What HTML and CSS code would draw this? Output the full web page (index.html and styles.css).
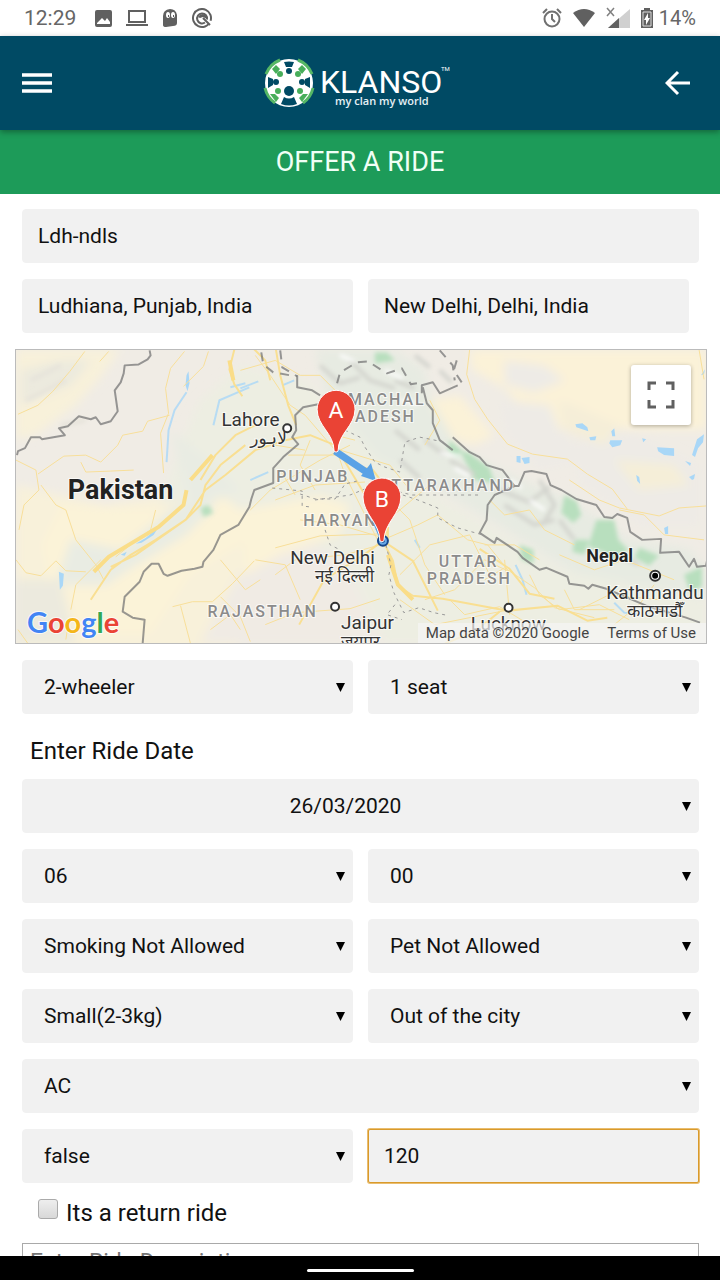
FILE: index.html
```html
<!DOCTYPE html>
<html lang="en">
<head>
<meta charset="utf-8">
<meta name="viewport" content="width=device-width, initial-scale=1">
<title>Klanso - Offer a ride</title>
<link rel="stylesheet" href="styles.css">
</head>
<body>
<div class="statusbar">
  <div class="status-left">
    <span class="clock">12:29</span>
    <svg width="17" height="17" viewBox="0 0 17 17"><path fill="#606060" fill-rule="evenodd" d="M2 0h13q2 0 2 2v13q0 2-2 2H2q-2 0-2-2V2q0-2 2-2zM2 14h13v-2l-3-4-2 3-3-3-5 5z"/></svg>
    <svg width="22" height="18" viewBox="0 0 22 18"><path fill="none" stroke="#606060" stroke-width="2" d="M3 2h16v11H3zM0 16h22"/></svg>
    <svg width="16" height="18" viewBox="0 0 16 18"><path fill="#606060" d="M1 16V7q0-6 7-7 6 0 7 6v8q0 3-4 3l-7 1q-3 0-3-2z"/><ellipse cx="6" cy="6" rx="2" ry="3" fill="#fff"/><ellipse cx="11" cy="6" rx="2" ry="3" fill="#fff"/><path d="M6 6h1v2H6zM11 6h1v2h-1z" fill="#606060"/></svg>
    <svg width="21" height="21" viewBox="0 0 21 21"><g fill="none" stroke="#606060" stroke-width="2"><circle cx="10" cy="10" r="9" stroke-dasharray="48 4 5 0" transform="rotate(70 10 10)"/><path d="M13 14.500a5 5 0 1 1 2-3M11 10l7 7"/></g><path fill="#606060" d="M6 9q2-3 5-3 4 1 4 5l-4-2-3 1z"/></svg>
  </div>
  <div class="status-right">
    <svg width="20" height="20" viewBox="0 0 20 20"><g fill="none" stroke="#707070" stroke-width="2"><circle cx="10" cy="11" r="7.500"/><path d="M10 6v5l3 3M1 5l4-4M19 5l-4-4"/></g></svg>
    <svg width="22" height="18" viewBox="0 0 22 18"><path fill="#606060" d="M0 4q11-8 22 0L11 18z"/></svg>
    <svg width="24" height="22" viewBox="0 0 24 22"><path fill="#d0d0d0" d="M24 2v19H2z"/><path fill="#606060" d="M13 11v10H2z"/><path stroke="#808080" stroke-width="1.500" d="M1 1l7 8M8 1L1 9"/></svg>
    <svg width="12" height="20" viewBox="0 0 12 20"><path fill="#606060" d="M3 2V0h6v2h3v18H0V2z"/><path fill="none" stroke="#ddd" d="M2 4h8v14H2z"/><path fill="#fff" d="M7 5l-4 7h2v5l4-7H7z"/></svg>
    <span class="battery">14%</span>
  </div>
</div>

<header class="appbar">
  <button class="icon-button" type="button" aria-label="Menu">
    <svg width="30" height="26" viewBox="0 0 30 26"><path stroke="#fff" stroke-width="3.500" d="M0 5h30M0 13h30M0 21h30"/></svg>
  </button>
  <a class="brand" href="#" aria-label="Klanso">
    <svg width="192" height="56" viewBox="262 54 192 56">
      <g transform="translate(288 82)">
        <circle r="24" fill="#fff"/>
        <g fill="none" stroke="#55b765" stroke-width="3">
          <path d="M-23-9A25 25 0 0 1-9-23M9-23A25 25 0 0 1 23-9M-24 5A25 25 0 0 0-14 20M14 20A25 25 0 0 0 24 5"/>
        </g>
        <g fill="#48ae5a">
          <circle cx="-9" cy="-9" r="3"/><circle cx="9" cy="-9" r="3"/><circle cx="-11" cy="8" r="3"/><circle cx="11" cy="8" r="3"/>
          <path d="M-17-14l4-4 4 4-4 5zM17-14l-4-4-4 4 4 5zM-19 11l5 0 4 4-3 4zM19 11l-5 0-4 4 3 4z"/>
        </g>
        <g fill="#004a64">
          <circle cy="-12" r="3"/><circle cx="-13" cy="-1" r="3"/><circle cx="13" cy="-1" r="3"/><circle cy="8" r="5"/>
          <path d="M-5-21Q0-22 5-21L3-16H-3zM-21-6l5 2v6l-5 3zM21-6l-5 2v6l5 3zM-5 14Q0 17 5 14L8 21Q0 24-8 21z"/>
        </g>
      </g>
      <text class="brand-name" x="319" y="92">KLANSO</text>
      <text class="brand-mark" x="440" y="70">TM</text>
      <text class="brand-tag" x="334" y="104">my clan my world</text>
    </svg>
  </a>
  <button class="icon-button" type="button" aria-label="Back">
    <svg width="25" height="26" viewBox="0 0 25 26"><path fill="none" stroke="#fff" stroke-width="3" d="M25 13H3M13 2L2 13l11 11"/></svg>
  </button>
</header>

<main class="content">
  <h1 class="title">OFFER A RIDE</h1>
  <form class="form">
    <input class="field" type="text" value="Ldh-ndls" aria-label="Ride name">
    <div class="row">
      <input class="field" type="text" value="Ludhiana, Punjab, India" aria-label="From">
      <div class="destination"><input class="field" type="text" value="New Delhi, Delhi, India" aria-label="To"></div>
    </div>

    <div class="map">
      <svg class="map-canvas" viewBox="15 349 692 295" preserveAspectRatio="xMidYMid slice" role="img" aria-label="Route from Ludhiana to New Delhi">
        <defs>
          <filter id="soft" x="-20%" y="-20%" width="140%" height="140%"><feGaussianBlur stdDeviation="5"/></filter>
          <filter id="relief" x="-20%" y="-20%" width="140%" height="140%"><feGaussianBlur stdDeviation="2"/></filter>
        </defs>
        <rect x="15" y="349" width="692" height="295" fill="#f0ece5"/>
        <g filter="url(#soft)">
          <path fill="#f8f1da" d="M15 349h105l-22 30-22 25-40 30-21 5zM15 485l90 20 60-10 70-10 40 60-40 110H15z"/>
          <path fill="#fbf3d8" d="M60 505l110 5 40-15 42 10-12 40-50 30-40 60H60l-20-90z"/>
          <path fill="#edeee2" d="M200 400l40-35 65 15 70 65 60 50 130 75 142 30v44H350l-80-110-50-40-60 10 20-60z"/>
          <path fill="#e9ece3" d="M70 540l50 10 50-40 25-15 20 10-30 30-50 30-30 20-50 0zM170 430l40 30 30 30-50 20z"/>
          <path fill="#f0ebe4" d="M235 580l50-50 60 30 40 84H200z"/>
          <path fill="#fbf3d8" d="M240 510l80-15 30 10-10 30-60 20-35 20z"/>
          <path fill="#fbf2d8" d="M470 349h237v80l-60 0-50 0-60 0-30-40-35-20zM430 400l30-5 35 40-20 10-35-10z"/>
          <path fill="#eeebe6" d="M505 360l40 5 20 15-30 12-30-8zM500 400l50 5 10 25 30 30-50 10-35-40zM580 420l60 15 60 30v60l-60 0-60-45z"/>
          <path fill="#f5eed8" d="M560 400l60 25-15 20-40-15zM615 460l60 5 15 20-50 5z"/>
          <path fill="#eceade" d="M20 370l40-10 30 0-20 25-50 20zM15 580h45l15 64H15z"/>
          <path fill="#e7ebe2" d="M315 349h80l30 20 5 30 30 50 60 30 50 20 60 40 60 10 17 20v30l-50-10-80-15-80-50-60-35-60-30-50-60z"/>
        </g>
        <g fill="#b8dfbe" filter="url(#relief)">
          <path d="M460 450l10 3 20 15 5 15-20-3zM565 495l12 6 5 14-8 8-12-10zM597 520l18 0 4 20 10 10-15 12-10-10-15-5zM575 540l15 0-5 15-12-3zM640 548l20 8-10 10-15-8zM520 545l14 5 0 14-12-4zM375 352l12 0 8 8-20 3zM450 440l12 10-4 8-10-8zM685 575l18-8v20l-12 5zM372 475l8 8 15 0-10 10zM200 508l8-3 5 8-10 4z"/>
        </g>
        <g fill="none" stroke="#d3d4ce" stroke-width="4" filter="url(#relief)">
          <path d="M320 365l20 18 20-6M350 360l20 20 25 8M395 380l20 8M440 370l12 12M425 440l20 15M395 430l25 20M500 490l30 12 20-15M505 505l30 20 20-5M540 480l15 25-12 20M560 520l15 20M620 555l20 10M450 460l25 15M400 460l20 18M415 355l15 12"/>
          <path stroke="#e6e3da" d="M30 380l30-15M25 400l40-20M60 425l25-5"/>
        </g>
        <g fill="none" stroke="#fff" stroke-width="3" filter="url(#relief)">
          <path d="M340 355l15 6M385 370l18 8M440 453l20 3M455 468l15 8M400 400l18 4M530 500l15 10M510 480l12 8"/>
        </g>
        <g fill="#a9d7f7">
          <path d="M186 375l2-4 1 12-2 8-2-6zM576 424l7-1 5 4 1 4-12-4zM590 437l7-1-1 4-5 0zM611 440l12 0-2 5-8 2-3-4zM612 431l3-3 1 8-3 0zM658 447l17 1v8l-10-1-6-4zM517 456l4 0 0 7-4-1zM522 458l8-1 0 6-5 1zM693 455l5-16 7-5-1 8-5 6-3 9zM686 461l6 2-1 3zM690 477l6-3-1 5-2 1zM135 544l10-6 13-11-5 8-12 8zM58 572l5 2-1 12-3 4zM120 555l6-3-2 4zM702 375l4-6-1 5zM665 528l4-2v8l-3 0zM637 475l3 2 1 7-3-3zM643 438l4 1-3 3z"/>
        </g>
        <g fill="none" stroke="#a9d7f7" stroke-width="2" opacity=".8">
          <path d="M186 392l-12 18-6 20-2 32M213 425l6-25 30-13M230 387l15-4M240 388l18-7M282 385l12-5M250 480l18-8M516 565l7 15 4 15M615 603l10 10 15 2M415 540l5 8"/>
        </g>
        <g fill="none" stroke="#f8df9a" stroke-width="1">
          <path d="M84 351l-15 20-17 20-15 14-20 9M108 351l-9 10M37 474l26-18 22-1 15 7 17-17 5-10 20-4 5-10 22-6M80 462l5 10 25-1 23-1M184 351l-14 17-5 20 3 25-8 20 3 40M208 351l-5 15-20 20M15 460l20 10 3 20-15 15-5 25M40 485l15 20 10 5 10 30 20 25 8 15M15 560l10 13 15 3 15-15 10 10 20 1M155 510l-5 20-20 15-15 12M70 610l5-25 25-25M65 640l3-20M17 630l10 14M172 607l20-5 20 0 20-18 22-23M180 606l10 38M220 597l20 20 10 25"/>
          <path d="M255 355l15 20 20 30 15 10 30 35M240 370l35-10 25 15M255 440l20 5 30 5M320 415l15 20 20 5M350 445l-30 15-50 30-20 20M335 445l10 30 15 30 20 40M338 455l-50 0M275 500l40-15 50-3M300 520l40 5 40 12M275 548l45-12 60-2M265 625l30-12 55-4 30-10M380 545l-35 10-50 5-20 15M255 560l30 5 15 35M383 540l35-15 20-10 30 25 20 5 20 25M390 500l20 20 15 45 20 30M375 530l25-20 30-25M400 575l30-30 40-10 20 40M425 600l30-10 30-30 25 12M400 600l35 25 70-14M450 600l15 15 35-8 25 15M485 580l20-12 30 20 20 20 40 10M505 560l5 55M530 575l10 20 20 15 40-5 30 15M565 590l10 20 40 0M580 610l30-15 50 5M560 555l35 15 30-10 50 20M340 395l-20-20-20 0M340 450l50 15 20 25M430 400l10 20-15 25M295 495l-15-25M310 440l-10 25 15 25"/>
          <path d="M470 349l-3 25 8 25 13 20 20 25 25 10 35 5 20 15 25 15 15 20M490 500l15 15 25-5 15 20 30 15M485 545l30 0 25 15M570 480l30 20 20 8 40 8 20-8 27-2M620 510l25 5 20 20 40 5M700 349l5 30M655 585l-15 20-25 20M210 630l20-15 10 15M220 560l25 30 15-10"/>
        </g>
        <g fill="none" stroke="#f9df92" stroke-width="2" stroke-linejoin="round">
          <path d="M234 349l-5 20 5 15 8 12M275 345l5 30 8 30 8 20M335 445l-25-10-25 5-30 10-30 25-20 15-20 30-30 20-25 15-20 15-20 30M245 445l-25 20-15 20-5 20-15 15-50 35-25 12M255 425l-20 10-20 20-15 25M338 450l15 25 15 25 16 42M338 450l15 15 20 5 15 20 0 50M384 540l-20 15-40 25-25 45M383 541l10 20 5 25 15 10 30 3 65 12 50-5 30 15 20-3M383 541l30 20 25 50M500 612l-25 20-30 12M250 345l15 15 5 20M390 500l-5 40M480 549l30 20 20 25 25 5"/>
        </g>
        <path fill="none" stroke="#fadd88" stroke-width="4" d="M186 490l-3 15-25 22-25 15-25 15-15 15M229 360l4 20M212 455l-22 25M388 555l10 30 15 15"/>
        <g fill="none" stroke="#777" stroke-width="1" stroke-linejoin="round">
          <path stroke-width="2" opacity=".75" d="M149 350l1 5-3 4-9 5-14 1-1 8-3 9-6 8 3 21-7 10-10 3-5-7-5 2-12-3-11 10-9 2 6 7-23 4-2-2-9 0-6 11-7 3-1 4"/>
          <path stroke-width="2" opacity=".75" d="M297 375v12l15 3 8 5M318 404l-15 3-8 8 1 15-4 7 6 7-15 13-10 11v15l-19 7-3 9-2 8-11 18-18 10-7 15-10 12-1 5-8 2-13 2-14 5-4-2-5-10h-7l-8 8-4 10-15 15-2 15 10 6 12 2-2 24"/>
          <path stroke-width="2" opacity=".75" d="M422 393v-8l11-3 7 11 18-8M423 387l4 16 6 7v13l7 17 13 10M453 437l17 15 10 5 7 8 16 5 12 16h4l6-14 7-1 15 3 4 11 11 5 15 9 20 6 8 12 8 1 5-4 10 4 3 14 12 8 19-1-1 14 19-1 10 15 5-8 3 8 9-1 1-5h8M515 486l-20 9-7 10-1 15-7 13 15 10 2-5 21 14 5 6 17 12 7-2 21 9 2 7 15 2 4 3 4-4 14 4 40 17 40 12 14 5"/>
          <path stroke-dasharray="9 7" stroke-width="2" opacity=".75" d="M261 352l2 12 10 8 17 3M280 350l2 17 15 9M337 383l3-11 17-10 11-1 19 12 15-5 9 16 11-2M440 350l13 15 2 15M457 360l-3 10 8 12"/>
          <path stroke-dasharray="3 4" stroke="#999" d="M345 430l15 7 5 10 10 15 10 5 15 5 5-30 15-5 25 5M272 488l30 3 0 15 8 1M300 494l15 5 20 0 10-15 12-3M325 530l5 15 10 5M315 500l35-5 20-8M392 490l20 5 20 0 50 0M403 495l15 5 20 8 0 10 20 10 25 7M386 545l5 20-2 10 5 18 10 20 15-5 15 5 15 3M395 605l-8 10 15 5"/>
        </g>
        <g class="map-region">
          <text x="348" y="405">MACHAL</text><text x="355" y="422">ADESH</text>
          <text x="276" y="482">PUNJAB</text><text x="379" y="491">UTTARAKHAND</text>
          <text x="303" y="526">HARYANA</text><text x="439" y="567">UTTAR</text><text x="427" y="584">PRADESH</text>
          <text x="207" y="617">RAJASTHAN</text>
        </g>
        <g class="map-country"><text x="67" y="499" class="map-country-large">Pakistan</text><text x="587" y="562">Nepal</text></g>
        <g class="map-city">
          <text x="221" y="426">Lahore</text><text x="250" y="444" class="map-native">لاہور</text>
          <text x="290" y="564">New Delhi</text><text x="315" y="582" class="map-native">नई दिल्ली</text>
          <text x="341" y="629">Jaipur</text><text x="341" y="648" class="map-native">जयपुर</text>
          <text x="607" y="599">Kathmandu</text><text x="628" y="617" class="map-native">काठमाडौँ</text>
          <text x="471" y="630">Lucknow</text>
        </g>
        <g fill="#fff" stroke="#333" stroke-width="2"><circle cx="287" cy="428" r="4"/><circle cx="335" cy="607" r="4"/><circle cx="509" cy="608" r="4"/><circle cx="656" cy="576" r="5"/></g>
        <circle cx="656" cy="576" r="3"/>
        <path stroke="#5aa2e6" stroke-width="7" d="M335 451l33 22"/><path fill="#5aa2e6" d="M361 476l10-13 5 18z"/>
        <path stroke="#5aa2e6" stroke-width="4" d="M374 520l9 22"/>
        <circle cx="383" cy="541" r="5" fill="#6aaae8" stroke="#17478b" stroke-width="2"/><circle cx="383" cy="541" r="2" fill="#17478b"/>
        <g class="map-pin">
          <path d="M334 451c0-18-17-25-17-42a19 19 0 0 1 38 0c0 17-17 24-17 42q-2 2-4 0z"/><text x="336" y="418">A</text>
          <path d="M380 541c0-18-17-27-17-44a19 19 0 0 1 38 0c0 17-17 26-17 44q-2 2-4 0z"/><text x="382" y="507">B</text>
        </g>
        <text class="map-logo" x="26" y="633"><tspan fill="#4285f4">G</tspan><tspan fill="#ea4335">o</tspan><tspan fill="#f4b619">o</tspan><tspan fill="#4285f4">g</tspan><tspan fill="#34a853">l</tspan><tspan fill="#ea4335">e</tspan></text>
      </svg>
      <button class="map-expand" type="button" aria-label="Toggle fullscreen view">
        <svg width="28" height="28" viewBox="0 0 28 28"><path fill="none" stroke="#606060" stroke-width="3" d="M2 9V2h7M19 2h7v7M26 19v7h-7M9 26H2v-7"/></svg>
      </button>
      <div class="map-credit"><span>Map data ©2020 Google</span><a href="#">Terms of Use</a></div>
    </div>

    <div class="row">
      <div class="select"><select class="field" aria-label="Vehicle"><option>2-wheeler</option></select></div>
      <div class="select"><select class="field" aria-label="Seats"><option>1 seat</option></select></div>
    </div>
    <label class="date-label" for="date">Enter Ride Date</label>
    <div class="select date"><select class="field" id="date"><option>26/03/2020</option></select></div>
    <div class="row">
      <div class="select"><select class="field" aria-label="Hour"><option>06</option></select></div>
      <div class="select"><select class="field" aria-label="Minute"><option>00</option></select></div>
    </div>
    <div class="row">
      <div class="select"><select class="field" aria-label="Smoking"><option>Smoking Not Allowed</option></select></div>
      <div class="select"><select class="field" aria-label="Pets"><option>Pet Not Allowed</option></select></div>
    </div>
    <div class="row">
      <div class="select"><select class="field" aria-label="Luggage"><option>Small(2-3kg)</option></select></div>
      <div class="select"><select class="field" aria-label="Trip type"><option>Out of the city</option></select></div>
    </div>
    <div class="select"><select class="field" aria-label="Air conditioning"><option>AC</option></select></div>
    <div class="row">
      <div class="select"><select class="field" aria-label="Recurring"><option>false</option></select></div>
      <input class="field active" type="text" value="120" aria-label="Price">
    </div>
    <div class="return"><input type="checkbox" id="return"><label for="return">Its a return ride</label></div>
    <textarea class="description" placeholder="Enter Ride Description" aria-label="Ride description"></textarea>
  </form>
</main>
<div class="navbar"><span class="home-handle"></span></div>
</body>
</html>
```
FILE: styles.css
```css
* { box-sizing: border-box; }

body {
  margin: 0;
  height: 100vh;
  display: flex;
  flex-direction: column;
  background: #fff;
  color: #111;
  font-family: Roboto, "Noto Sans", sans-serif;
  font-size: 21px;
}

button, input, select, textarea { font: inherit; color: inherit; }
svg { display: block; }

.statusbar {
  flex: none;
  height: 36px;
  padding: 0 24px;
  display: flex;
  justify-content: space-between;
  color: #666;
}
.status-left, .status-right { display: flex; align-items: center; }
.status-left { gap: 14px; }
.status-right { gap: 11px; }
.clock { margin-right: 5px; }
.battery { margin-left: -5px; font-size: 20px; }

.appbar {
  flex: none;
  position: relative;
  z-index: 1;
  height: 94px;
  padding: 0 30px 0 22px;
  display: flex;
  align-items: center;
  justify-content: space-between;
  background: #004a64;
  box-shadow: 0 2px 6px rgba(0, 0, 0, .35);
}
.icon-button { padding: 0; border: 0; background: none; }
.brand-name { font-size: 32px; font-weight: 400; fill: #fff; }
.brand-mark { font-size: 6px; fill: #fff; }
.brand-tag { font-family: "Open Sans", sans-serif; font-size: 11px; font-weight: 600; fill: #e6f1f5; }

.content {
  flex: 1;
  min-height: 0;
  overflow: hidden auto;
  scrollbar-width: none;
}
.title {
  margin: 0;
  background: #1d9b59;
  color: #f0fff6;
  font-size: 27px;
  font-weight: 400;
  line-height: 64px;
  text-align: center;
}

.form {
  display: flex;
  flex-direction: column;
  gap: 16px;
  padding: 15px 21px 15px 22px;
}
.row { display: grid; grid-template-columns: 1fr 1fr; gap: 15px; }
.field {
  display: block;
  width: 100%;
  height: 54px;
  padding: 0 15px;
  border: 1px solid #f1f1f1;
  border-radius: 4px;
  outline: 0;
  background: #f1f1f1;
  appearance: none;
}
.destination { padding-right: 10px; }
.select { position: relative; }
.select .field { padding: 0 30px 0 21px; }
.select::after {
  content: "";
  position: absolute;
  top: 23px;
  right: 8px;
  width: 9px;
  height: 9px;
  background: #000;
  clip-path: polygon(0 0, 100% 0, 50% 100%);
  pointer-events: none;
}
.date .field { padding: 0 51px 0 21px; text-align: center; text-align-last: center; }
.active { border-color: #d99a2b; border-radius: 2px; box-shadow: 0 0 0 1px #e9bd70; }
.date-label { padding: 9px 8px 0; font-size: 24px; line-height: 24px; }

.map {
  position: relative;
  height: 295px;
  margin: 0 -8px 0 -7px;
  border: 1px solid #bbb;
  overflow: hidden;
}
.map-canvas { width: 100%; height: 100%; }
.map-canvas text { paint-order: stroke; stroke: #fff; stroke-opacity: .7; stroke-width: 2px; }
.map-region text { font-size: 16px; font-weight: 500; letter-spacing: 2px; fill: #8b8b8b; }
.map-country text { font-size: 18px; font-weight: 700; fill: #222; }
.map-country .map-country-large { font-size: 27px; }
.map-city text { font-size: 19px; fill: #333; }
.map-city .map-native { font-family: "Noto Sans Devanagari", "Noto Sans", "DejaVu Sans", sans-serif; font-size: 17px; }
.map-pin path { fill: #ea4335; stroke: #fff; stroke-width: 1px; }
.map-canvas .map-pin text { font-size: 23px; fill: #fff; stroke: none; text-anchor: middle; }
.map-canvas .map-logo { font-family: Lato, sans-serif; font-size: 29px; font-weight: 700; }
.map-expand {
  position: absolute;
  top: 15px;
  right: 15px;
  width: 60px;
  height: 60px;
  padding: 0;
  display: grid;
  place-items: center;
  border: 0;
  border-radius: 3px;
  background: #fff;
  box-shadow: 0 1px 4px rgba(0, 0, 0, .3);
}
.map-credit {
  position: absolute;
  right: 0;
  bottom: 0;
  padding: 0 10px 0 8px;
  display: flex;
  gap: 18px;
  background: rgba(245, 245, 245, .7);
  color: #444;
  font-size: 15px;
  line-height: 20px;
}
.map-credit a { color: inherit; text-decoration: none; }

.return {
  display: flex;
  align-items: center;
  gap: 8px;
  padding-left: 16px;
  font-size: 24px;
  line-height: 28px;
}
.return input {
  appearance: none;
  width: 20px;
  height: 20px;
  margin: 0 0 8px;
  border: 1px solid #aaa;
  border-radius: 3px;
  background: linear-gradient(#eee, #d8d8d8);
}
.description {
  height: 110px;
  padding: 5px 7px;
  border: 1px solid #a9a9a9;
  resize: none;
  font-size: 23px;
}
.description::placeholder { color: #757575; }

.navbar {
  flex: none;
  height: 24px;
  display: grid;
  place-items: center;
  background: #000;
}
.home-handle { width: 107px; height: 3px; margin-top: 4px; border-radius: 2px; background: #fff; }
```
